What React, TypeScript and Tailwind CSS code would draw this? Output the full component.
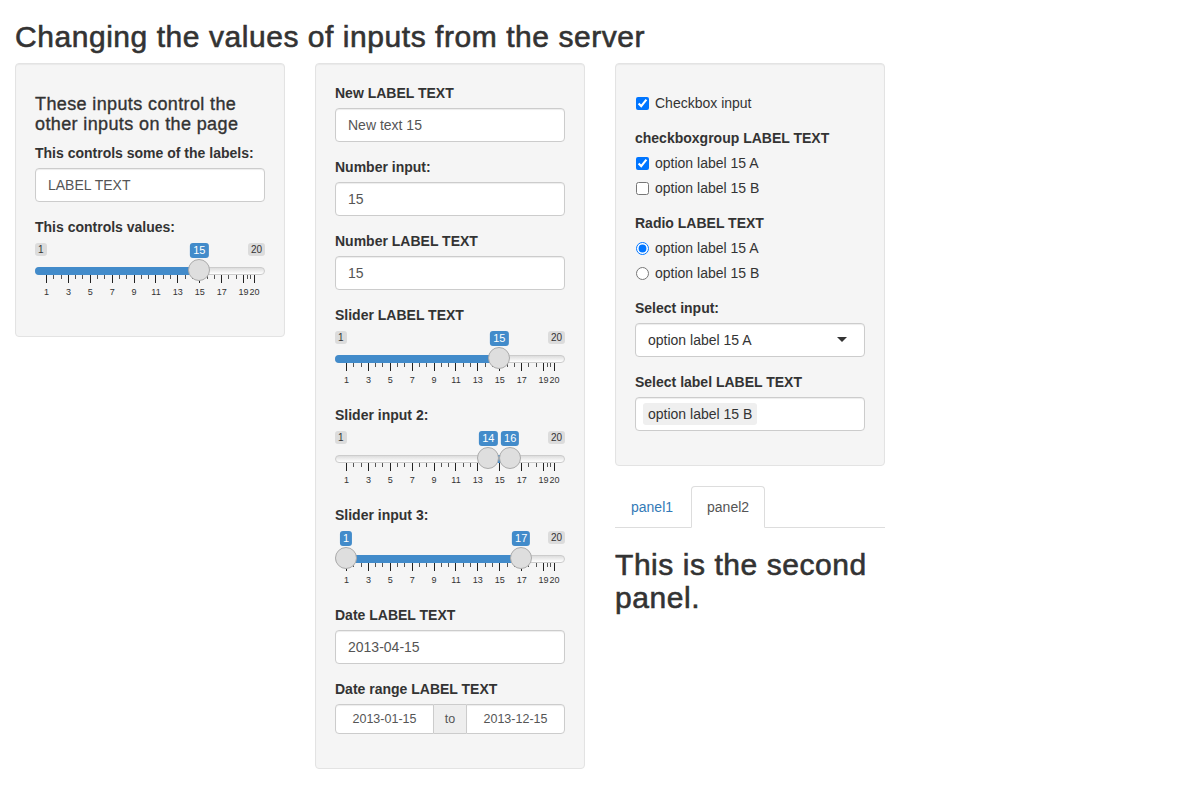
import React from "react";

const TRACK = 230;
const HANDLE = 22;
const pos = (v: number) => HANDLE / 2 + ((v - 1) / 19) * (TRACK - HANDLE);

function Slider({
  values,
  showMin = true,
  showMax = true,
}: {
  values: number[];
  showMin?: boolean;
  showMax?: boolean;
}) {
  const bigVals = [1, 3, 5, 7, 9, 11, 13, 15, 17, 19, 20];
  const big = bigVals.map(pos);
  const small: number[] = [];
  for (let i = 1; i < big.length; i++) {
    const a = big[i - 1];
    const b = big[i];
    small.push(a + (b - a) / 3, a + (2 * (b - a)) / 3);
  }
  const range = values.length === 2;
  const barLeft = range ? pos(values[0]) : 0;
  const barWidth = range ? pos(values[1]) - pos(values[0]) : pos(values[0]);
  return (
    <div className="relative h-[60px] w-full select-none">
      {showMin && (
        <span className="absolute left-0 top-[1px] h-[13px] rounded-[3px] bg-[rgba(0,0,0,0.1)] px-[3px] text-[10px] leading-[13px] text-[#333]">
          1
        </span>
      )}
      {showMax && (
        <span className="absolute right-0 top-[1px] h-[13px] rounded-[3px] bg-[rgba(0,0,0,0.1)] px-[3px] text-[10px] leading-[13px] text-[#333]">
          20
        </span>
      )}
      <div className="absolute left-0 top-[25px] h-[8px] w-full rounded-full border border-[#cccccc] bg-linear-to-b from-[#dddddd] to-[#ffffff]" />
      <div
        className={`absolute top-[25px] h-[8px] bg-[#428bca] ${range ? "" : "rounded-l-full"}`}
        style={{ left: barLeft, width: barWidth }}
      />
      {big.map((x, i) => (
        <span
          key={"b" + i}
          className="absolute top-[33px] h-[8px] w-[1px] bg-[#222]"
          style={{ left: x }}
        />
      ))}
      {small.map((x, i) => (
        <span
          key={"s" + i}
          className="absolute top-[33px] h-[4px] w-[1px] bg-[#555]"
          style={{ left: x }}
        />
      ))}
      {bigVals.map((v, i) => (
        <span
          key={"t" + i}
          className="absolute top-[45px] -translate-x-1/2 text-[9px] leading-[10px] text-[#333]"
          style={{ left: big[i] + 0.5 }}
        >
          {v}
        </span>
      ))}
      {values.map((v, i) => (
        <div
          key={"h" + i}
          className="absolute top-[17px] h-[22px] w-[22px] rounded-full border border-[#ababab] bg-[#dedede]"
          style={{ left: pos(v) - HANDLE / 2 }}
        />
      ))}
      {values.map((v, i) => (
        <span
          key={"v" + i}
          className="absolute top-[1px] h-[15px] -translate-x-1/2 rounded-[3px] bg-[#428bca] px-[3px] text-[11px] leading-[15px] text-white"
          style={{ left: pos(v) }}
        >
          {v}
        </span>
      ))}
    </div>
  );
}

function Label({ children }: { children: React.ReactNode }) {
  return <label className="mb-[5px] block text-[14px] font-bold leading-[20px]">{children}</label>;
}

function TextBox({ value }: { value: string }) {
  return (
    <input
      readOnly
      value={value}
      className="block h-[34px] w-full rounded-[4px] border border-[#cccccc] bg-white px-[12px] py-[6px] text-[14px] leading-[20px] text-[#555] shadow-[inset_0_1px_1px_rgba(0,0,0,0.075)] outline-none"
    />
  );
}

function Well({ children }: { children: React.ReactNode }) {
  return (
    <div className="rounded-[4px] border border-[#e3e3e3] bg-[#f5f5f5] p-[19px] shadow-[inset_0_1px_1px_rgba(0,0,0,0.05)]">
      {children}
    </div>
  );
}

function Check({ label, checked, type = "checkbox", name }: { label: string; checked?: boolean; type?: string; name?: string }) {
  return (
    <label className="flex items-start text-[14px] leading-[20px]">
      <input
        type={type}
        name={name}
        defaultChecked={checked}
        className="m-0 ml-[1px] mr-[6px] mt-[4px] h-[13px] w-[13px] shrink-0"
      />
      <span>{label}</span>
    </label>
  );
}

export default function App() {
  return (
    <div className="min-h-screen bg-white px-[15px] font-['Liberation_Sans',Arial,sans-serif] text-[14px] leading-[20px] text-[#333]">
      <h2 className="mb-[10px] mt-[20px] text-[30px] font-medium leading-[33px] tracking-[0.55px] [-webkit-text-stroke:0.6px_#333]">
        Changing the values of inputs from the server
      </h2>
      <div className="flex items-start gap-[30px]">
        <div className="w-[270px]">
          <Well>
            <h4 className="mb-[8px] mt-[12px] text-[18px] font-medium leading-[19.8px] tracking-[0.38px] [-webkit-text-stroke:0.35px_#333]">
              These inputs control the
              <br />
              other inputs on the page
            </h4>
            <div className="mb-[15px]">
              <Label>This controls some of the labels:</Label>
              <TextBox value="LABEL TEXT" />
            </div>
            <div className="mb-[15px]">
              <Label>This controls values:</Label>
              <Slider values={[15]} />
            </div>
          </Well>
        </div>

        <div className="w-[270px]">
          <Well>
            <div className="mb-[15px]">
              <Label>New LABEL TEXT</Label>
              <TextBox value="New text 15" />
            </div>
            <div className="mb-[15px]">
              <Label>Number input:</Label>
              <TextBox value="15" />
            </div>
            <div className="mb-[15px]">
              <Label>Number LABEL TEXT</Label>
              <TextBox value="15" />
            </div>
            <div className="mb-[15px]">
              <Label>Slider LABEL TEXT</Label>
              <Slider values={[15]} />
            </div>
            <div className="mb-[15px]">
              <Label>Slider input 2:</Label>
              <Slider values={[14, 16]} />
            </div>
            <div className="mb-[15px]">
              <Label>Slider input 3:</Label>
              <Slider values={[1, 17]} showMin={false} />
            </div>
            <div className="mb-[15px]">
              <Label>Date LABEL TEXT</Label>
              <TextBox value="2013-04-15" />
            </div>
            <div className="mb-[15px]">
              <Label>Date range LABEL TEXT</Label>
              <div className="flex h-[30px] w-full text-[12.5px] leading-[20px] text-[#555]">
                <div className="flex flex-1 items-center justify-center rounded-l-[4px] border border-[#cccccc] bg-white shadow-[inset_0_1px_1px_rgba(0,0,0,0.075)]">
                  2013-01-15
                </div>
                <div className="flex w-[32px] items-center justify-center border-y border-[#cccccc] bg-[#eeeeee]">
                  to
                </div>
                <div className="flex flex-1 items-center justify-center rounded-r-[4px] border border-[#cccccc] bg-white shadow-[inset_0_1px_1px_rgba(0,0,0,0.075)]">
                  2013-12-15
                </div>
              </div>
            </div>
          </Well>
        </div>

        <div className="w-[270px]">
          <Well>
            <div className="mb-[15px] mt-[10px]">
              <Check label="Checkbox input" checked />
            </div>
            <div className="mb-[15px]">
              <Label>checkboxgroup LABEL TEXT</Label>
              <div className="flex flex-col gap-[5px]">
                <Check label="option label 15 A" checked />
                <Check label="option label 15 B" />
              </div>
            </div>
            <div className="mb-[15px]">
              <Label>Radio LABEL TEXT</Label>
              <div className="flex flex-col gap-[5px]">
                <Check type="radio" name="radio1" label="option label 15 A" checked />
                <Check type="radio" name="radio1" label="option label 15 B" />
              </div>
            </div>
            <div className="mb-[15px]">
              <Label>Select input:</Label>
              <div className="flex h-[34px] w-full items-center justify-between rounded-[4px] border border-[#cccccc] bg-white pl-[12px] pr-[17px] text-[14px] text-[#333] shadow-[inset_0_1px_1px_rgba(0,0,0,0.075)]">
                <span>option label 15 A</span>
                <svg width="10" height="5" viewBox="0 0 10 5" className="mt-[-1px]">
                  <polygon points="0,0 10,0 5,5" fill="#333" />
                </svg>
              </div>
            </div>
            <div className="mb-[15px]">
              <Label>Select label LABEL TEXT</Label>
              <div className="flex h-[34px] w-full items-center rounded-[4px] border border-[#cccccc] bg-white px-[7px] text-[14px] text-[#333] shadow-[inset_0_1px_1px_rgba(0,0,0,0.075)]">
                <span className="h-[22px] rounded-[3px] bg-[#efefef] px-[5px] leading-[22px]">option label 15 B</span>
              </div>
            </div>
          </Well>

          <div className="mt-[20px]">
            <ul className="flex border-b border-[#dddddd]">
              <li className="-mb-px mr-[2px]">
                <a className="block rounded-t-[4px] border border-transparent px-[15px] py-[10px] leading-[20px] text-[#337ab7]">
                  panel1
                </a>
              </li>
              <li className="-mb-px mr-[2px]">
                <a className="block rounded-t-[4px] border border-[#dddddd] border-b-transparent bg-white px-[15px] py-[10px] leading-[20px] text-[#555]">
                  panel2
                </a>
              </li>
            </ul>
            <h2 className="mb-[10px] mt-[20px] text-[30px] font-medium leading-[33px] tracking-[0.55px] [-webkit-text-stroke:0.6px_#333]">
              This is the second panel.
            </h2>
          </div>
        </div>
      </div>
    </div>
  );
}
